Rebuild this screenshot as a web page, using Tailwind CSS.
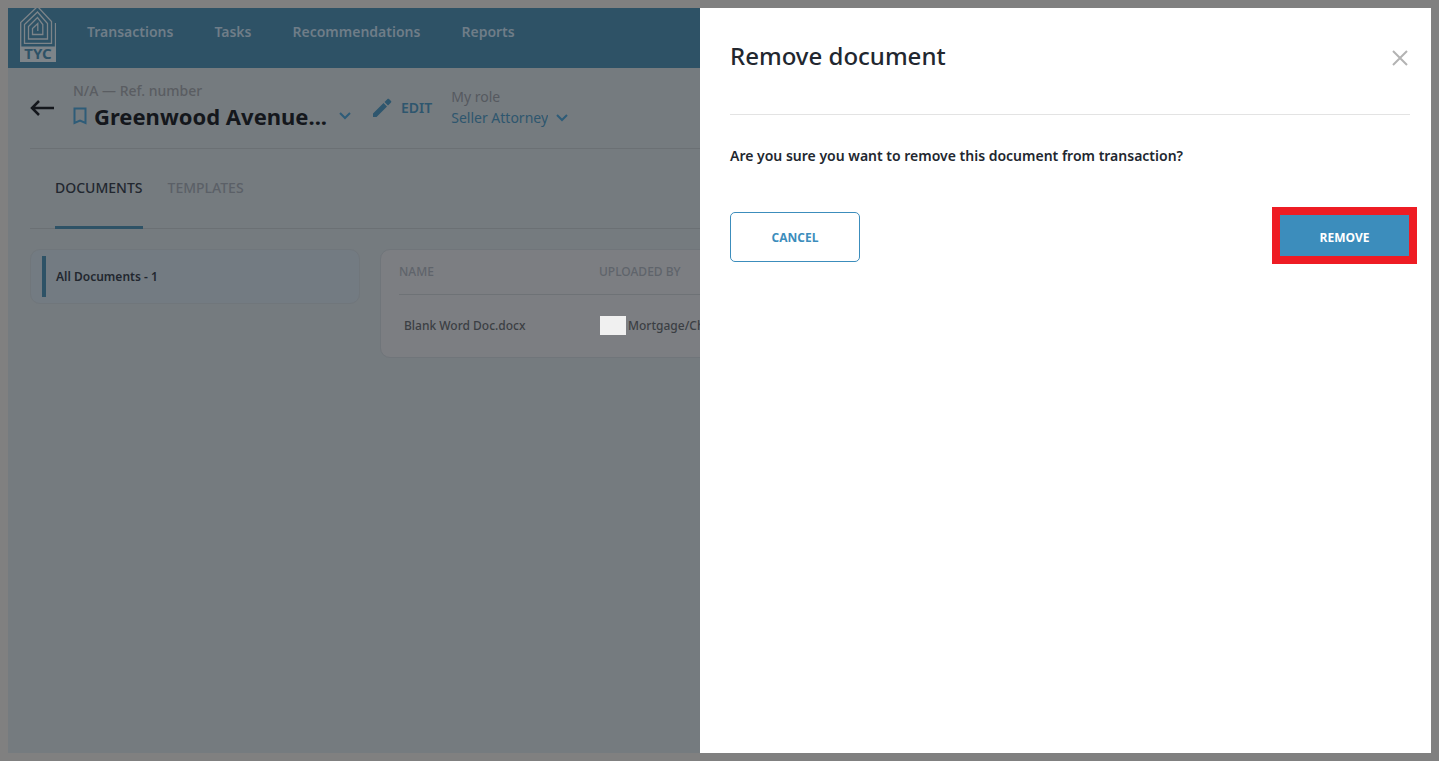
<!DOCTYPE html>
<html lang="en">
<head>
  <meta charset="UTF-8" />
  <meta name="viewport" content="width=device-width, initial-scale=1" />
  <title>Documents | TYC</title>
  <script src="https://cdn.jsdelivr.net/npm/@tailwindcss/browser@4"></script>
</head>
<body class="min-h-screen flex bg-[#808080] p-2 font-['Noto_Sans','Open_Sans',sans-serif] text-sm text-[#22272f]">

  <!-- Dimmed page behind the drawer -->
  <div class="flex-1 min-w-0 overflow-hidden bg-[#757b7f]">

    <!-- Header -->
    <header class="flex h-15 bg-[#2e5266] pl-3">
      <a href="#" aria-label="TYC home" class="shrink-0">
        <svg width="36" height="54" viewBox="0 0 36 54" fill="none" stroke="#7d8489">
          <path d="M35.5 15V53M0.700 39V14.500L17.500 -1.500L31.500 13.500V35.300H4.500V16.500L17.500 4L27.500 15.500V31H8.500V18.500L17.500 9.500L22.800 16.500V26.500H12.500V20.500L17.800 15.500V23" stroke-width="1.300" />
          <path d="M0 38.500H36V54H0Z" fill="#7d8489" stroke="none" />
          <text x="18" y="51" text-anchor="middle" font-family="Noto Sans" font-size="15" font-weight="700" fill="#2e5266" stroke="none">TYC</text>
        </svg>
      </a>
      <nav class="flex gap-[41px] ml-[31px] pt-3.5 leading-5 font-semibold text-[#6f7d88]">
        <a href="#">Transactions</a>
        <a href="#">Tasks</a>
        <a href="#">Recommendations</a>
        <a href="#">Reports</a>
      </nav>
    </header>

    <!-- Transaction title -->
    <section class="flex h-[81px] ml-[22px] border-b border-[#6b7074] whitespace-nowrap">
      <button type="button" aria-label="Back" class="self-center w-[43px] shrink-0">
        <svg width="24" height="18" viewBox="0 0 24 18" fill="none" stroke="#14171c" stroke-width="2.500">
          <path d="M9 2L2 9L9 16M2 9H24" />
        </svg>
      </button>
      <div class="pt-[13px] w-[280px] shrink-0">
        <p class="leading-5 font-medium text-[#5a5d62]">N/A — Ref. number</p>
        <div class="flex items-center h-[30px]">
          <svg width="14" height="18" viewBox="0 0 14 18" fill="none" stroke="#2e5c78" stroke-width="2">
            <path d="M1.500 1.500H12.500V16L7 13.500L1.500 16Z" />
          </svg>
          <h1 class="ml-[7px] text-[22px] leading-8 font-bold text-[#14171c]">Greenwood Avenue...</h1>
          <button type="button" aria-label="Transaction menu" class="ml-3">
            <svg width="12" height="8" viewBox="0 0 12 8" fill="none" stroke="#2e5c78" stroke-width="2"><path d="M1 1L6 6L11 1" /></svg>
          </button>
        </div>
      </div>
      <button type="button" class="flex items-center gap-2 ml-5 font-semibold text-[#2e566e]">
        <svg width="20" height="20" viewBox="0 0 20 20" fill="#2e566e">
          <path d="M0 15.500V19H3.500L14 8.500L10.500 5ZM11.500 4L15 7.500L18 4.500C18.500 4 18.500 3.500 18 3L16 1C15.500 .5 15 .5 14.500 1Z" />
        </svg>
        EDIT
      </button>
      <div class="ml-[19px] pt-[18px]">
        <label for="role" class="block leading-[22px] text-[#56595f]">My role</label>
        <div class="flex items-center">
          <select id="role" class="appearance-none leading-5 text-[#2e566e]"><option>Seller Attorney</option></select>
          <svg class="ml-2" width="12" height="8" viewBox="0 0 12 8" fill="none" stroke="#2e5c78" stroke-width="2"><path d="M1 1L6 6L11 1" /></svg>
        </div>
      </div>
    </section>

    <!-- Tabs -->
    <nav class="flex gap-[25px] h-20 ml-[22px] pl-[25px] border-b border-[#6b7074] font-medium">
      <a href="#" class="h-20 pt-[29px] border-b-3 border-[#2e5266]">DOCUMENTS</a>
      <a href="#" class="pt-[29px] text-[#5b6067]">TEMPLATES</a>
    </nav>

    <!-- Documents -->
    <main class="flex items-start gap-5 ml-[22px] mt-5 text-xs whitespace-nowrap">
      <aside class="w-[330px] shrink-0 rounded-[10px] border border-[#70767b] bg-[#737b82] py-1.5 pl-[11px]">
        <a href="#" class="flex items-center h-[41px] pl-2.5 border-l-4 border-[#2e5266] font-semibold">All Documents - 1</a>
      </aside>
      <div class="w-[1030px] shrink-0 rounded-[10px] border border-[#70757a] bg-[#7c7e82] px-[18px] pb-2.5">
        <table class="w-full table-fixed text-left">
          <thead>
            <tr class="h-11 border-b border-[#6e7276] text-[#5f646b]">
              <th class="w-[200px] font-medium">NAME</th>
              <th class="font-medium">UPLOADED BY</th>
            </tr>
          </thead>
          <tbody>
            <tr class="h-[53px] font-medium text-[#3b3f44]">
              <td class="pl-[5px] pt-2.5">Blank Word Doc.docx</td>
              <td class="pl-px pt-2.5">
                <div class="flex items-center gap-0.5"><span class="w-[26px] h-[19px] bg-[#f0f0f0]"></span>Mortgage/Choice</div>
              </td>
            </tr>
          </tbody>
        </table>
      </div>
    </main>
  </div>

  <!-- Remove document drawer -->
  <section role="dialog" aria-labelledby="drawer-title" class="w-[731px] shrink-0 bg-white pl-[30px] pr-[21px]">
    <div class="flex items-center justify-between h-[107px] pb-2.5 border-b border-[#e3e3e3]">
      <h2 id="drawer-title" class="text-2xl font-medium">Remove document</h2>
      <button type="button" aria-label="Close" class="px-0.5 pt-1">
        <svg width="16" height="16" viewBox="0 0 16 16" fill="none" stroke="#b3b3b3" stroke-width="2"><path d="M1 1L15 15M15 1L1 15" /></svg>
      </button>
    </div>
    <p class="mt-[31px] leading-5 font-semibold">Are you sure you want to remove this document from transaction?</p>
    <div class="flex items-center justify-between mt-[41px] -mr-[7px] text-xs font-bold font-['Open_Sans','Noto_Sans',sans-serif]">
      <button type="button" class="w-[130px] h-[50px] mt-0.5 pt-0.5 rounded-[5px] border border-[#3c8dbc] text-[#3c8dbc]">CANCEL</button>
      <button type="button" class="w-[145px] h-[57px] pt-1 border-8 border-[#ee1c24] bg-[#3c8dbc] text-white">REMOVE</button>
    </div>
  </section>

</body>
</html>
